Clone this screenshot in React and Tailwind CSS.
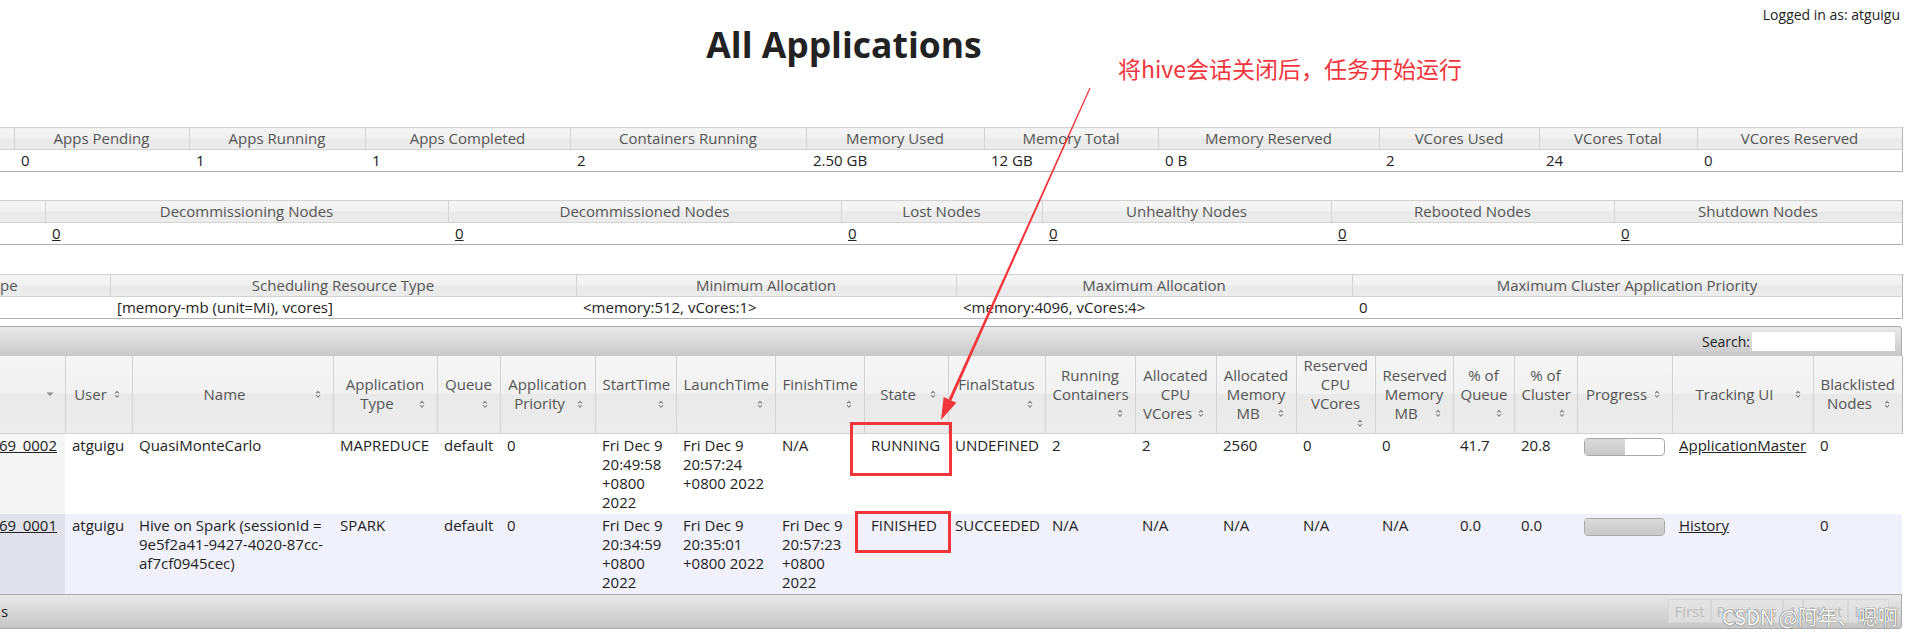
import React from 'react'

// column widths measured off the screenshot (page is scrolled, left edge is cut)
const metricCols = ['w-[14px]', 'w-[175px]', 'w-[176px]', 'w-[205px]', 'w-[236px]', 'w-[178px]', 'w-[174px]', 'w-[221px]', 'w-[160px]', 'w-[158px]', 'w-[205px]']
const metricHeads = ['', 'Apps Pending', 'Apps Running', 'Apps Completed', 'Containers Running', 'Memory Used', 'Memory Total', 'Memory Reserved', 'VCores Used', 'VCores Total', 'VCores Reserved']
const metricVals = ['', '0', '1', '1', '2', '2.50 GB', '12 GB', '0 B', '2', '24', '0']

const nodeCols = ['w-[45px]', 'w-[403px]', 'w-[393px]', 'w-[201px]', 'w-[289px]', 'w-[283px]', 'w-[288px]']
const nodeHeads = ['', 'Decommissioning Nodes', 'Decommissioned Nodes', 'Lost Nodes', 'Unhealthy Nodes', 'Rebooted Nodes', 'Shutdown Nodes']
const nodeVals = ['', '0', '0', '0', '0', '0', '0']

const schedCols = ['w-[110px]', 'w-[466px]', 'w-[380px]', 'w-[396px]', 'w-[550px]']
const schedHeads = ['pe', 'Scheduling Resource Type', 'Minimum Allocation', 'Maximum Allocation', 'Maximum Cluster Application Priority']
const schedVals = ['', '[memory-mb (unit=Mi), vcores]', '<memory:512, vCores:1>', '<memory:4096, vCores:4>', '0']

const appCols = [
  'w-[65px]', 'w-[67px]', 'w-[201px]', 'w-[104px]', 'w-[63px]', 'w-[95px]', 'w-[81px]', 'w-[99px]', 'w-[89px]', 'w-[84px]', 'w-[97px]',
  'w-[90px]', 'w-[81px]', 'w-[80px]', 'w-[79px]', 'w-[78px]', 'w-[61px]', 'w-[63px]', 'w-[95px]', 'w-[141px]', 'w-[89px]',
]
const appHeads = [
  [''],
  ['User'],
  ['Name'],
  ['Application', 'Type'],
  ['Queue', ''],
  ['Application', 'Priority'],
  ['StartTime', ''],
  ['LaunchTime', ''],
  ['FinishTime', ''],
  ['State'],
  ['FinalStatus', ''],
  ['Running', 'Containers', ''],
  ['Allocated', 'CPU', 'VCores'],
  ['Allocated', 'Memory', 'MB'],
  ['Reserved', 'CPU', 'VCores', ''],
  ['Reserved', 'Memory', 'MB'],
  ['% of', 'Queue', ''],
  ['% of', 'Cluster', ''],
  ['Progress'],
  ['Tracking UI'],
  ['Blacklisted', 'Nodes'],
]

const apps = [
  {
    id: '69_0002', user: 'atguigu', name: 'QuasiMonteCarlo', type: 'MAPREDUCE', queue: 'default', priority: '0',
    start: 'Fri Dec 9 20:49:58 +0800 2022', launch: 'Fri Dec 9 20:57:24 +0800 2022', finish: 'N/A',
    state: 'RUNNING', final: 'UNDEFINED', containers: '2', cpu: '2', mem: '2560', rcpu: '0', rmem: '0',
    pq: '41.7', pc: '20.8', progress: 50, tracking: 'ApplicationMaster', black: '0',
  },
  {
    id: '69_0001', user: 'atguigu', name: 'Hive on Spark (sessionId = 9e5f2a41-9427-4020-87cc-af7cf0945cec)', type: 'SPARK', queue: 'default', priority: '0',
    start: 'Fri Dec 9 20:34:59 +0800 2022', launch: 'Fri Dec 9 20:35:01 +0800 2022', finish: 'Fri Dec 9 20:57:23 +0800 2022',
    state: 'FINISHED', final: 'SUCCEEDED', containers: 'N/A', cpu: 'N/A', mem: 'N/A', rcpu: 'N/A', rmem: 'N/A',
    pq: '0.0', pc: '0.0', progress: 100, tracking: 'History', black: '0',
  },
]

function SortIcon() {
  return (
    <svg width="16" height="16" viewBox="0 0 16 16" className="shrink-0">
      <path d="M6 7.3L8 5.3L10 7.3M6 9.2L8 11.2L10 9.2" fill="none" stroke="#8d8d8d" strokeWidth="1.1" />
    </svg>
  )
}

function SortedDesc() {
  return (
    <svg width="16" height="16" viewBox="0 0 16 16" className="shrink-0">
      <path d="M4.5 6.5H11.5L8 10Z" fill="#8a8a8a" />
    </svg>
  )
}

function InfoTable({ cols, heads, values, links, className }) {
  return (
    <table className={`w-[1902px] table-fixed border-collapse ${className}`}>
      <colgroup>
        {cols.map((c, i) => <col key={i} className={c} />)}
      </colgroup>
      <thead>
        <tr>
          {heads.map((h, i) => (
            <th
              key={i}
              className="h-[22px] overflow-hidden whitespace-nowrap border-t border-r border-b border-[#d3d3d3] bg-[linear-gradient(to_bottom,#f5f5f5_0%,#f1f1f1_50%,#e9e9e9_50%,#ececec_100%)] px-[7px] text-center font-normal leading-[19px] text-[#555] first:px-0 first:text-left last:border-r-[#b5b5b5]"
            >
              {h}
            </th>
          ))}
        </tr>
      </thead>
      <tbody>
        <tr>
          {values.map((v, i) => (
            <td key={i} className="h-[22px] whitespace-nowrap border-b border-[#b0b0b0] px-[7px] leading-[19px] last:border-r">
              {links && v ? <a className="underline">{v}</a> : v}
            </td>
          ))}
        </tr>
      </tbody>
    </table>
  )
}

function HeadCell({ lines, sorted }) {
  const last = lines.length - 1
  return (
    <th className="h-[77px] border-r border-b border-[#d3d3d3] bg-[linear-gradient(to_bottom,#f5f5f5_0%,#f1f1f1_50%,#e9e9e9_50%,#ececec_100%)] px-[7px] align-middle font-normal leading-[19px] text-[#555] last:border-r-[#b5b5b5]">
      {lines.map((l, i) =>
        i < last ? (
          <div key={i} className="h-[19px] whitespace-nowrap text-center">{l}</div>
        ) : (
          <div key={i} className="flex h-[19px] items-center">
            <span className="flex-1 whitespace-nowrap text-center">{l}</span>
            {sorted ? <SortedDesc /> : <SortIcon />}
          </div>
        )
      )}
    </th>
  )
}

function Progress({ value }) {
  return (
    <div className="mt-[2px] flex h-[18px] w-[81px] overflow-hidden rounded-[4px] border border-[#a9a9a9] bg-white">
      <div
        className="h-full border-r border-[#b5b5b5] bg-[linear-gradient(to_bottom,#dadada,#c9c9c9)] last:border-r-0"
        style={{ width: `${value}%` }}
      />
    </div>
  )
}

function AppRow({ a, odd }) {
  const td = 'align-top px-[7px] py-[2px] leading-[19px]'
  return (
    <tr className={odd ? 'h-[80px] bg-[#f1f1fb]' : 'h-[80px] bg-white'}>
      <td className={`${td} ${odd ? 'bg-[#e1e1eb]' : 'bg-[#f5f5f5]'}`}>
        <div className="flex justify-end pr-[1px]">
          <a className="underline">{a.id}</a>
        </div>
      </td>
      <td className={td}>{a.user}</td>
      <td className="align-top pl-[7px] pr-[3px] py-[2px] leading-[19px]">{a.name}</td>
      <td className={`${td} whitespace-nowrap`}>{a.type}</td>
      <td className={td}>{a.queue}</td>
      <td className={td}>{a.priority}</td>
      <td className={td}>{a.start}</td>
      <td className={td}>{a.launch}</td>
      <td className={td}>{a.finish}</td>
      <td className={td}>{a.state}</td>
      <td className={`${td} whitespace-nowrap`}>{a.final}</td>
      <td className={td}>{a.containers}</td>
      <td className={td}>{a.cpu}</td>
      <td className={td}>{a.mem}</td>
      <td className={td}>{a.rcpu}</td>
      <td className={td}>{a.rmem}</td>
      <td className={td}>{a.pq}</td>
      <td className={td}>{a.pc}</td>
      <td className={td}>
        <Progress value={a.progress} />
      </td>
      <td className={td}>
        <a className="underline">{a.tracking}</a>
      </td>
      <td className={td}>{a.black}</td>
    </tr>
  )
}

export default function App() {
  return (
    <div className="relative h-[638px] w-[1909px] overflow-hidden bg-white font-['Open_Sans',sans-serif] text-[15px] text-[#222]">
      {/* header */}
      <div className="flex h-[22px] justify-end pr-[9px] pt-[5px] text-[14px] leading-[19px]">Logged in as: atguigu</div>
      <h1 className="w-[1688px] text-center text-[35.5px] font-bold leading-[44px] text-[#222]">All Applications</h1>

      {/* cluster overview tables */}
      <InfoTable className="mt-[61px]" cols={metricCols} heads={metricHeads} values={metricVals} />
      <InfoTable className="mt-[28px]" cols={nodeCols} heads={nodeHeads} values={nodeVals} links />
      <InfoTable className="mt-[29px]" cols={schedCols} heads={schedHeads} values={schedVals} />

      {/* applications widget */}
      <div className="mt-[7px] w-[1902px]">
        <div className="flex h-[30px] items-center justify-end rounded-tr-[4px] border-t border-r border-[#aaa] bg-[linear-gradient(to_bottom,#e9e9e9,#c9c9c9)] pr-[6px]">
          <span className="text-[14px] text-[#222]">Search:</span>
          <input className="ml-[2px] h-[19px] w-[143px] bg-white outline-none" />
        </div>
        <table className="w-[1902px] table-fixed border-collapse">
          <colgroup>
            {appCols.map((c, i) => <col key={i} className={c} />)}
          </colgroup>
          <thead>
            <tr>
              {appHeads.map((lines, i) => <HeadCell key={i} lines={lines} sorted={i === 0} />)}
            </tr>
          </thead>
          <tbody>
            {apps.map((a, i) => <AppRow key={a.id} a={a} odd={i === 1} />)}
          </tbody>
        </table>
        <div className="flex h-[35px] items-center justify-between rounded-br-[4px] border border-l-0 border-[#aaa] bg-[linear-gradient(to_bottom,#e8e8e8,#c6c6c6)] pr-[12px]">
          <span className="pl-[1px]">s</span>
          <div className="flex h-[24px] text-[#bdbdbd]">
            {['First', 'Previous', '1', 'Next', 'Last'].map((p) => (
              <span key={p} className="flex items-center border border-[#d6d6d6] bg-[#e4e4e4]/70 px-[5px] leading-[19px]">{p}</span>
            ))}
          </div>
        </div>
      </div>

      {/* screenshot annotations */}
      <div className="pointer-events-none absolute left-[1118px] top-[53px] font-['Noto_Sans_CJK_SC','Noto_Sans',sans-serif] text-[23px] leading-[30px] text-[#f2353b]">
        将hive会话关闭后，任务开始运行
      </div>
      <svg className="pointer-events-none absolute left-0 top-0" width="1909" height="638">
        <polygon points="1090.55,88.25 1089.45,87.75 948.63,399.29 951.37,400.51" fill="#f2353b" />
        <polygon points="956.38,402.77 941,420 943.62,397.03" fill="#f2353b" />
        <rect x="851.5" y="423.5" width="99" height="51" fill="none" stroke="#f2353b" strokeWidth="3" />
        <rect x="856.5" y="512.5" width="93" height="39" fill="none" stroke="#f2353b" strokeWidth="3" />
      </svg>
      <div className="pointer-events-none absolute left-[1722px] top-[603px] font-['Noto_Sans_CJK_SC','Noto_Sans',sans-serif] text-[20px] leading-[28px] text-white [text-shadow:0_0_1px_#555,0_0_1px_#555]">
        CSDN @阿年、嗯啊
      </div>
    </div>
  )
}
